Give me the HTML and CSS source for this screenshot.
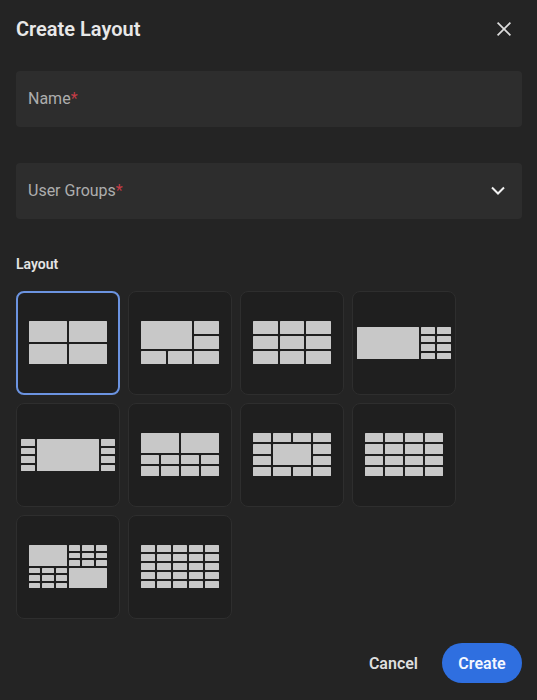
FILE: index.html
```html
<!DOCTYPE html>
<html lang="en">
<head>
<meta charset="utf-8">
<title>Create Layout</title>
<link rel="stylesheet" href="styles.css">
</head>
<body>
<main class="dialog">
  <header class="head">
    <h1 class="title">Create Layout</h1>
    <button class="close" aria-label="Close">
      <svg width="16" height="16" viewBox="0 0 16 16"><path d="M1.6 1.6 14.4 14.4M14.4 1.6 1.6 14.4" fill="none" stroke="#dcdcdc" stroke-width="1.7"/></svg>
    </button>
  </header>
  <div class="field"><span class="label">Name<span class="req">*</span></span></div>
  <div class="field select">
    <span class="label">User Groups<span class="req">*</span></span>
    <svg class="chev" width="16" height="10" viewBox="0 0 16 10"><path d="M2 1.5 8 7.5 14 1.5" fill="none" stroke="#f2f2f2" stroke-width="2"/></svg>
  </div>
  <h2 class="section">Layout</h2>
  <div class="tiles">
    <div class="tile selected"><div class="thumb t1"><i></i><i></i><i></i><i></i></div></div>
    <div class="tile"><div class="thumb t2"><i class="big"></i><i></i><i></i><i></i><i></i><i></i></div></div>
    <div class="tile"><div class="thumb t3"><i></i><i></i><i></i><i></i><i></i><i></i><i></i><i></i><i></i></div></div>
    <div class="tile"><div class="thumb t4"><i class="big"></i><i></i><i></i><i></i><i></i><i></i><i></i><i></i><i></i></div></div>
    <div class="tile"><div class="thumb t5"><i></i><i class="big"></i><i></i><i></i><i></i><i></i><i></i><i></i><i></i></div></div>
    <div class="tile"><div class="thumb t6"><i class="wide"></i><i class="wide"></i><i></i><i></i><i></i><i></i><i></i><i></i><i></i><i></i></div></div>
    <div class="tile"><div class="thumb t7"><i></i><i></i><i></i><i></i><i></i><i class="big"></i><i></i><i></i><i></i><i></i><i></i><i></i><i></i></div></div>
    <div class="tile"><div class="thumb t8"><i></i><i></i><i></i><i></i><i></i><i></i><i></i><i></i><i></i><i></i><i></i><i></i><i></i><i></i><i></i><i></i></div></div>
    <div class="tile"><div class="thumb t9"><i class="big"></i><i></i><i></i><i></i><i></i><i></i><i></i><i></i><i></i><i></i><i></i><i></i><i></i><i class="big"></i><i></i><i></i><i></i><i></i><i></i><i></i></div></div>
    <div class="tile"><div class="thumb t10"><i></i><i></i><i></i><i></i><i></i><i></i><i></i><i></i><i></i><i></i><i></i><i></i><i></i><i></i><i></i><i></i><i></i><i></i><i></i><i></i><i></i><i></i><i></i><i></i><i></i></div></div>
  </div>
  <footer class="foot">
    <button class="btn cancel">Cancel</button>
    <button class="btn create">Create</button>
  </footer>
</main>
</body>
</html>
```
FILE: styles.css
```css
* { box-sizing: border-box; }
html, body { margin: 0; height: 100%; }
body {
  background: #242424;
  color: #e6e6e6;
  font-family: Roboto, "Liberation Sans", sans-serif;
}
.dialog { padding: 0 15px 0 16px; }
.head {
  height: 58px;
  margin-bottom: 13px;
  display: flex;
  align-items: center;
  justify-content: space-between;
}
.title { margin: 0; font-size: 20px; font-weight: 600; color: #e8e8e8; }
.close {
  width: 20px;
  height: 20px;
  margin-right: 8px;
  padding: 0;
  border: 0;
  background: none;
  display: flex;
  align-items: center;
  justify-content: center;
}
.field {
  height: 56px;
  margin-bottom: 36px;
  padding: 0 16px 2px 12px;
  border-radius: 4px;
  background: #2d2d2d;
  display: flex;
  align-items: center;
  justify-content: space-between;
}
.chev { margin-top: 2px; }
.label { font-size: 16px; font-weight: 400; color: #adadad; }
.req { color: #c23c46; }
.section {
  margin: 0 0 18px;
  height: 18px;
  line-height: 18px;
  font-size: 14px;
  font-weight: 600;
  color: #e4e4e4;
}
.tiles {
  display: grid;
  grid-template-columns: repeat(4, 104px);
  grid-auto-rows: 104px;
  gap: 8px;
}
.tile {
  border: 1px solid #2e2e2e;
  border-radius: 8px;
  background: #1f1f1f;
  display: flex;
  align-items: center;
  justify-content: center;
}
.tile.selected { border: 2px solid #6b93e0; }
.thumb { width: 78px; height: 43px; margin-bottom: 1px; display: grid; gap: 2px; }
.thumb i { background: #c8c8c8; display: block; border-radius: 0.5px; }
.t1 { grid-template-columns: repeat(2, 1fr); grid-template-rows: repeat(2, 1fr); }
.t2 { grid-template-columns: repeat(3, 1fr); grid-template-rows: repeat(3, 1fr); }
.t2 .big { grid-column: span 2; grid-row: span 2; }
.t3 { grid-template-columns: repeat(3, 1fr); grid-template-rows: repeat(3, 1fr); }
.t4 {
  width: 94px;
  height: 32px;
  margin-bottom: 0;
  grid-template-columns: 62px 1fr 1fr;
  grid-template-rows: repeat(4, 1fr);
}
.t4 .big { grid-row: span 4; }
.t5 {
  width: 94px;
  height: 32px;
  margin-bottom: 0;
  grid-template-columns: 14px 62px 14px;
  grid-template-rows: repeat(4, 1fr);
}
.t5 .big { grid-row: span 4; }
.t6 { grid-template-columns: repeat(4, 1fr); grid-template-rows: 2fr 1fr 1fr; }
.t6 .wide { grid-column: span 2; }
.t7 { grid-template-columns: repeat(4, 1fr); grid-template-rows: repeat(4, 1fr); }
.t7 .big { grid-column: span 2; grid-row: span 2; }
.t8 { grid-template-columns: repeat(4, 1fr); grid-template-rows: repeat(4, 1fr); }
.t9 { grid-template-columns: repeat(6, 1fr); grid-template-rows: repeat(6, 1fr); }
.t9 .big { grid-column: span 3; grid-row: span 3; }
.t10 { grid-template-columns: repeat(5, 1fr); grid-template-rows: repeat(5, 1fr); }
.foot {
  margin-top: 24px;
  display: flex;
  justify-content: flex-end;
  align-items: center;
  gap: 24px;
}
.btn {
  height: 40px;
  padding: 0;
  border: 0;
  background: none;
  font-family: inherit;
  font-size: 16px;
  font-weight: 600;
  color: #dedede;
}
.create { width: 80px; border-radius: 20px; background: #2f6fe0; color: #f4f7ff; }
```
